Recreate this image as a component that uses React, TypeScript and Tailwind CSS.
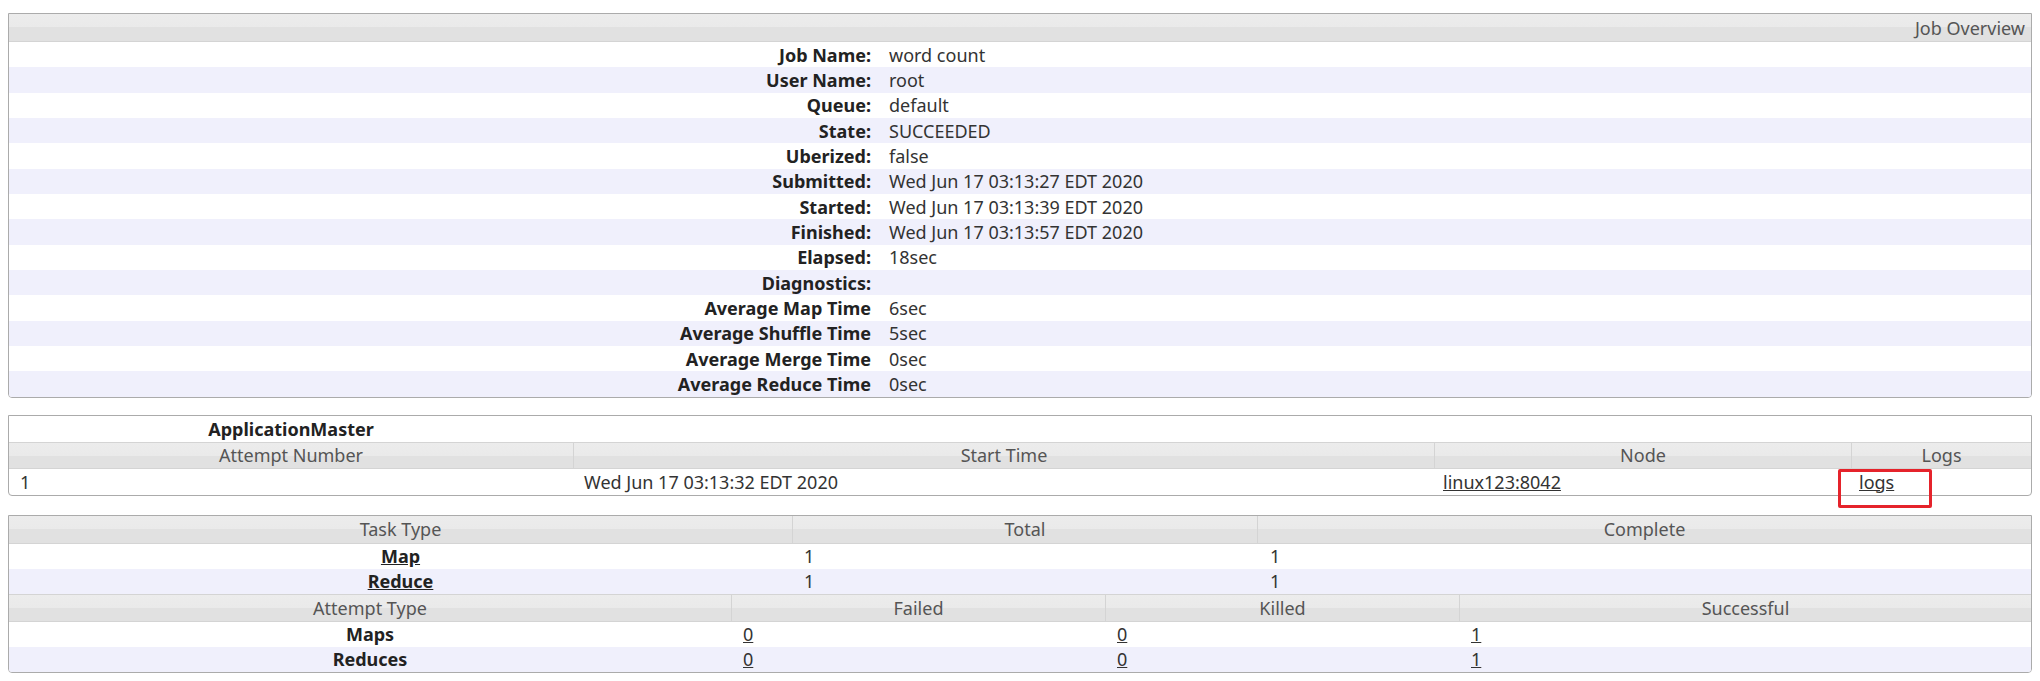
import React from "react";

const rows: [string, string][] = [
  ["Job Name:", "word count"],
  ["User Name:", "root"],
  ["Queue:", "default"],
  ["State:", "SUCCEEDED"],
  ["Uberized:", "false"],
  ["Submitted:", "Wed Jun 17 03:13:27 EDT 2020"],
  ["Started:", "Wed Jun 17 03:13:39 EDT 2020"],
  ["Finished:", "Wed Jun 17 03:13:57 EDT 2020"],
  ["Elapsed:", "18sec"],
  ["Diagnostics:", ""],
  ["Average Map Time", "6sec"],
  ["Average Shuffle Time", "5sec"],
  ["Average Merge Time", "0sec"],
  ["Average Reduce Time", "0sec"],
];

const hdr =
  "bg-[linear-gradient(#ececec_0%,#eaeaea_50%,#e1e1e1_50%,#e1e1e1_100%)] text-[#555] border-b border-[#d4d4d4]";
const box = "mx-2 border border-[#ababab] rounded-b-[4px] overflow-hidden bg-white";

export default function App() {
  return (
    <div
      className="relative w-[2040px] h-[681px] bg-white text-[#222] text-[18px] leading-none pt-[13px]"
      style={{ fontFamily: '"Noto Sans", "Open Sans", sans-serif' }}
    >
      {/* Job Overview */}
      <div className={box}>
        <div className={`${hdr} h-[28px] flex items-center justify-end pr-[6px]`}>Job Overview</div>
        {rows.map(([k, v], i) => (
          <div
            key={k}
            className={`flex items-center h-[25.35px] ${i % 2 === 1 ? "bg-[#f0f0fc]" : "bg-white"}`}
          >
            <div className="w-[862px] text-right font-bold">{k}</div>
            <div className="pl-[18px] text-[#333]">{v}</div>
          </div>
        ))}
      </div>

      {/* ApplicationMaster */}
      <div className={`${box} mt-[17px]`}>
        <div className="h-[26px] grid grid-cols-[564px_1fr] items-center">
          <div className="text-center font-bold">ApplicationMaster</div>
          <div />
        </div>
        <div className={`${hdr} h-[27px] grid grid-cols-[564px_861px_417px_1fr] border-t`}>
          <div className="flex items-center justify-center">Attempt Number</div>
          <div className="flex items-center justify-center border-l border-[#d4d4d4]">Start Time</div>
          <div className="flex items-center justify-center border-l border-[#d4d4d4]">Node</div>
          <div className="flex items-center justify-center border-l border-[#d4d4d4]">Logs</div>
        </div>
        <div className="h-[26px] grid grid-cols-[564px_861px_417px_1fr] items-center text-[#333]">
          <div className="pl-[11px]">1</div>
          <div className="pl-[11px]">Wed Jun 17 03:13:32 EDT 2020</div>
          <div className="pl-[9px]">
            <a className="underline text-[#333]">linux123:8042</a>
          </div>
          <div className="pl-[8px] h-full flex items-center">
            <a className="underline text-[#333]">logs</a>
          </div>
        </div>
      </div>

      {/* Tasks */}
      <div className={`${box} mt-[19px]`}>
        <div className={`${hdr} h-[28px] grid grid-cols-[783px_465px_1fr]`}>
          <div className="flex items-center justify-center">Task Type</div>
          <div className="flex items-center justify-center border-l border-[#d4d4d4]">Total</div>
          <div className="flex items-center justify-center border-l border-[#d4d4d4]">Complete</div>
        </div>
        {[
          ["Map", "1", "1"],
          ["Reduce", "1", "1"],
        ].map(([a, b, c], i) => (
          <div
            key={a}
            className={`h-[25px] grid grid-cols-[783px_465px_1fr] items-center ${i === 1 ? "bg-[#f0f0fc]" : "bg-white"}`}
          >
            <div className="text-center font-bold">
              <a className="underline">{a}</a>
            </div>
            <div className="pl-[12px] text-[#333]">{b}</div>
            <div className="pl-[13px] text-[#333]">{c}</div>
          </div>
        ))}
        <div className={`${hdr} h-[28px] grid grid-cols-[722px_374px_354px_1fr] border-t`}>
          <div className="flex items-center justify-center">Attempt Type</div>
          <div className="flex items-center justify-center border-l border-[#d4d4d4]">Failed</div>
          <div className="flex items-center justify-center border-l border-[#d4d4d4]">Killed</div>
          <div className="flex items-center justify-center border-l border-[#d4d4d4]">Successful</div>
        </div>
        {[
          ["Maps", "0", "0", "1"],
          ["Reduces", "0", "0", "1"],
        ].map(([a, b, c, d], i) => (
          <div
            key={a}
            className={`h-[25px] grid grid-cols-[722px_374px_354px_1fr] items-center ${i === 1 ? "bg-[#f0f0fc]" : "bg-white"}`}
          >
            <div className="text-center font-bold">{a}</div>
            <div className="pl-[12px] text-[#333]">
              <a className="underline">{b}</a>
            </div>
            <div className="pl-[12px] text-[#333]">
              <a className="underline">{c}</a>
            </div>
            <div className="pl-[12px] text-[#333]">
              <a className="underline">{d}</a>
            </div>
          </div>
        ))}
      </div>

      {/* red highlight box over logs */}
      <div className="absolute left-[1838px] top-[469px] w-[94px] h-[39px] border-[3px] border-[#e5232b] rounded-[2px] pointer-events-none" />
    </div>
  );
}
